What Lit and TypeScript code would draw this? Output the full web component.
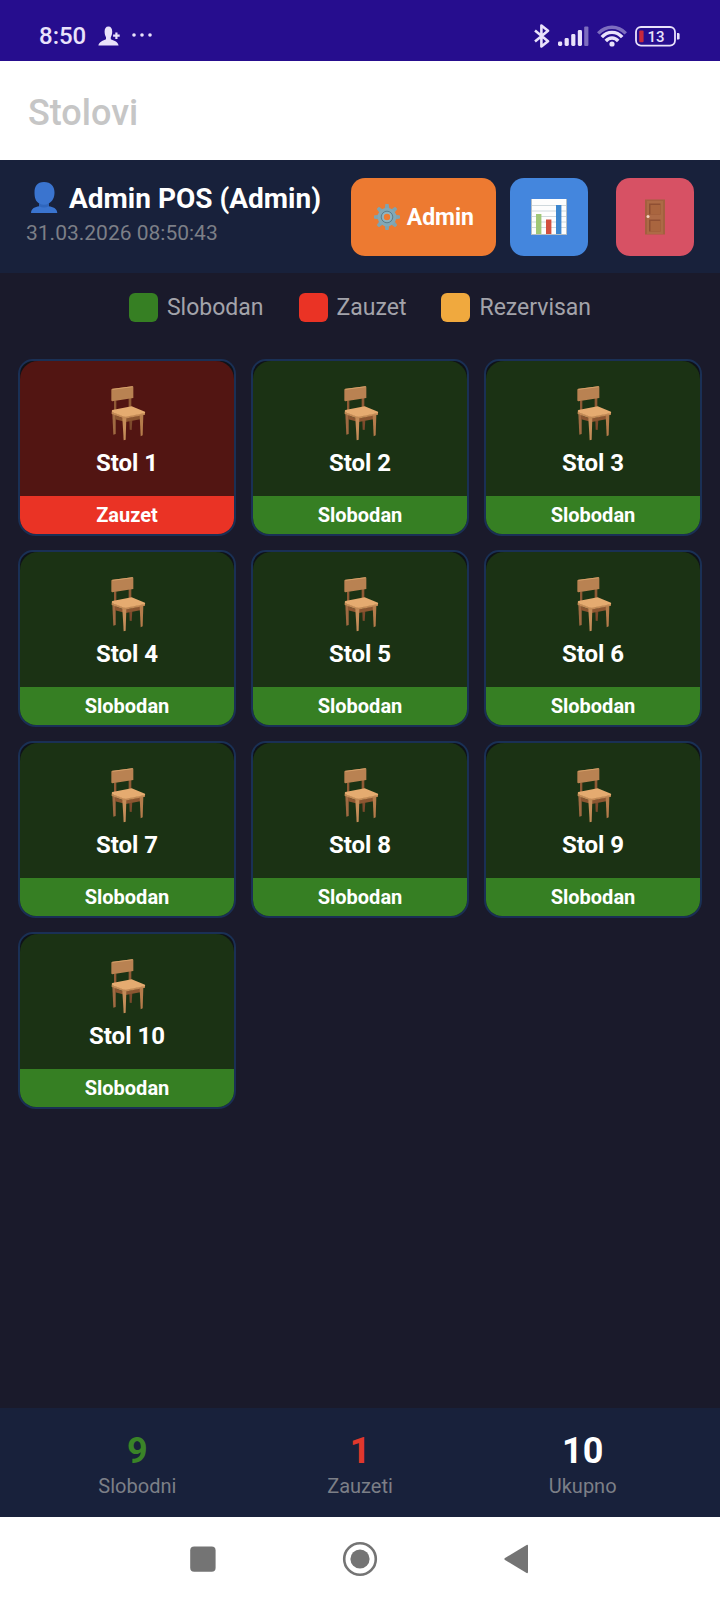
import { css, html, LitElement, svg } from 'lit'
import { customElement, property } from 'lit/decorators.js'

type TableStatus = 'free' | 'busy'

interface Table {
  name: string
  status: TableStatus
}

const statusLabels: Record<TableStatus, string> = {
  free: 'Slobodan',
  busy: 'Zauzet',
}

const tables: Table[] = Array.from({ length: 10 }, (_, i) => ({
  name: `Stol ${i + 1}`,
  status: i === 0 ? 'busy' : 'free',
}))

const legend = [
  { kind: 'free', label: 'Slobodan' },
  { kind: 'busy', label: 'Zauzet' },
  { kind: 'reserved', label: 'Rezervisan' },
]

const gearTeeth = [0, 45, 90, 135, 180, 225, 270, 315]

/**
 * System status bar with clock, notifications and device indicators.
 */
@customElement('status-bar')
export class StatusBar extends LitElement {
  static override styles = css`
    :host {
      display: flex;
      align-items: center;
      justify-content: space-between;
      box-sizing: border-box;
      height: 61px;
      padding: 11px 40px 0 39px;
      background: #260d8e;
      color: #e9e2fb;
    }

    .group {
      display: flex;
      align-items: center;
    }

    .left {
      gap: 12px;
    }

    .right {
      gap: 8px;
    }

    time {
      font-size: 24px;
      font-weight: 500;
      line-height: 28px;
    }

    svg {
      display: block;
      fill: currentColor;
    }

    .faded {
      opacity: 0.45;
    }

    .stroke {
      fill: none;
      stroke: currentColor;
    }

    .level {
      fill: #c8283c;
    }

    .charge {
      font-size: 15px;
      font-weight: 500;
    }
  `

  override render() {
    return html`
      <div class="group left">
        <time>8:50</time>
        <svg width="22" height="20" viewBox="0 0 22 20" aria-hidden="true">
          <path
            d="M10.4 0.5C13 0.5 14.2 2.6 14.2 5.6C14.2 8.2 13.6 10 12.8 11.2V13.2C15.4 14.6 20 15.2 20.6 19.6H0.4C0.8 15.6 5.4 14.6 8 13.2V11.2C7.2 10 6.6 8.2 6.6 5.6C6.6 2.6 7.8 0.5 10.4 0.5Z"
          />
          <path d="M17.3 6.4H19.5V8.6H21.7V10.8H19.5V13H17.3V10.8H15.1V8.6H17.3Z" />
        </svg>
        <svg width="20" height="6" viewBox="0 0 20 6" aria-hidden="true">
          <circle cx="2" cy="2" r="1.8" />
          <circle cx="10" cy="2" r="1.8" />
          <circle cx="18" cy="2" r="1.8" />
        </svg>
      </div>
      <div class="group right">
        <svg width="16" height="24" viewBox="0 0 16 24" aria-hidden="true">
          <path
            class="stroke"
            stroke-width="2.6"
            stroke-linejoin="round"
            d="M1 6.5L14 17.2L7.4 22.4V1.6L14 6.8L1 17.5"
          />
        </svg>
        <svg width="31" height="21" viewBox="0 0 31 21" aria-hidden="true">
          <rect x="0" y="15.6" width="4.2" height="4.4" rx="1.4" />
          <rect x="6.6" y="12" width="4.2" height="8" rx="1.4" />
          <rect x="13.2" y="8" width="4.2" height="12" rx="1.4" />
          <rect x="19.8" y="4" width="4.2" height="16" rx="1.4" />
          <rect class="faded" x="26.2" y="0.6" width="4.2" height="19.4" rx="1" />
        </svg>
        <svg width="30" height="22" viewBox="0 0 30 22" aria-hidden="true">
          <g class="stroke" stroke-width="3.4">
            <path class="faded" d="M1.2 8.4C9 0.2 21 0.2 28.8 8.4" />
            <path d="M4.8 12.2C10.6 5.8 19.4 5.8 25.2 12.2" />
            <path d="M8.8 16C12.4 12 17.6 12 21.2 16" />
          </g>
          <circle cx="15" cy="19" r="2.6" />
        </svg>
        <svg width="45" height="21" viewBox="0 0 45 21" role="img" aria-label="13%">
          <rect class="stroke" stroke-width="1.8" x="1" y="1" width="39" height="18.6" rx="5" />
          <path d="M42 7H43.2Q44.6 7 44.6 8.4V12.2Q44.6 13.6 43.2 13.6H42Z" />
          <rect class="level" x="4.2" y="4.6" width="4.4" height="11.6" rx="1" />
          <text class="charge" x="21" y="15.6" text-anchor="middle">13</text>
        </svg>
      </div>
    `
  }
}

/**
 * One restaurant table with its occupancy status.
 */
@customElement('table-card')
export class TableCard extends LitElement {
  @property()
  name = ''

  @property()
  status: TableStatus = 'free'

  static override styles = css`
    :host {
      display: block;
    }

    .card {
      display: flex;
      flex-direction: column;
      box-sizing: border-box;
      width: 100%;
      padding: 0;
      overflow: hidden;
      border: 2px solid #1a3055;
      border-radius: 15px 15px 18px 18px;
      background: #0f1218;
      color: #fff;
      font: inherit;
      cursor: pointer;
    }

    .body {
      display: flex;
      flex-direction: column;
      align-items: center;
      gap: 8px;
      padding: 25px 0 19px;
      border-radius: 18px 18px 0 0;
    }

    .free .body {
      background: #1b3214;
    }

    .busy .body {
      background: #521512;
    }

    .name {
      font-size: 24px;
      font-weight: 700;
      line-height: 28px;
    }

    .badge {
      font-size: 20px;
      font-weight: 700;
      line-height: 38px;
    }

    .free .badge {
      background: #367f23;
    }

    .busy .badge {
      background: #ea3325;
    }
  `

  override render() {
    return html`
      <button class="card ${this.status}">
        <span class="body">
          <svg width="38" height="55" viewBox="-9 0 114 165" aria-hidden="true">
            <path fill="#8f5a35" d="M9 44L16 43V76H9ZM53 36L61 35V66H53Z" />
            <path fill="#7d4a2c" d="M55 104L64 103L62 132L56 131Z" />
            <path fill="#b98252" d="M4 8L64 1Q67 1 67 4V36L4 46Q1 46 1 43V11Q1 8 4 8Z" />
            <path fill="#d9a36c" d="M2 9L64 1L67 3L6 11Z" />
            <path fill="#a06a42" d="M4 84L14 88V144L7 146Z" />
            <path fill="#8c5631" d="M12 88L40 98L96 86V98L44 108L12 100Z" />
            <path fill="#c58d59" d="M34 95H46L44 161L38 163Z" />
            <path fill="#b57c4b" d="M86 88L97 86L95 148L89 151Z" />
            <path fill="#c28955" d="M2 77L41 91L102 80V86L41 98L2 84Z" />
            <path fill="#e5ab70" d="M4 72L62 61L102 77Q104 80 100 82L44 92Q40 93 36 91L4 79Q0 75 4 72Z" />
          </svg>
          <span class="name">${this.name}</span>
        </span>
        <span class="badge">${statusLabels[this.status]}</span>
      </button>
    `
  }
}

@customElement('app-root')
export class AppRoot extends LitElement {
  static override styles = css`
    :host {
      display: flex;
      flex-direction: column;
      min-height: 100vh;
      background: #1a1a2b;
      color: #fff;
      font-family: Roboto, 'Noto Sans', sans-serif;
    }

    svg {
      display: block;
      flex: none;
    }

    button {
      padding: 0;
      border: 0;
      background: none;
      color: inherit;
      font: inherit;
      cursor: pointer;
    }

    .title {
      margin: 0;
      padding: 5px 28px 0;
      background: #fff;
      color: #c6c6c6;
      font-size: 36px;
      font-weight: 500;
      line-height: 94px;
    }

    .toolbar {
      display: flex;
      align-items: flex-start;
      gap: 14px;
      padding: 18px 26px 17px;
      background: #18213b;
    }

    .user {
      flex: 1;
      padding-top: 3px;
      white-space: nowrap;
    }

    .user-name {
      display: flex;
      gap: 8px;
      font-size: 28px;
      font-weight: 700;
      line-height: 36px;
    }

    .user-time {
      display: block;
      color: #7c7f87;
      font-size: 21px;
      line-height: 32px;
    }

    .action {
      display: flex;
      align-items: center;
      justify-content: center;
      gap: 6px;
      width: 78px;
      height: 78px;
      border-radius: 14px;
      font-size: 23px;
      font-weight: 700;
    }

    .admin {
      width: auto;
      padding: 0 22px;
      background: #ed7a31;
    }

    .reports {
      background: #4486dd;
    }

    .logout {
      margin-left: 14px;
      background: #d75164;
    }

    .legend {
      display: flex;
      justify-content: center;
      gap: 35px;
      margin: 0;
      padding: 20px 0 36px;
      list-style: none;
      color: #a3a3aa;
      font-size: 23px;
      line-height: 30px;
    }

    .legend li {
      display: flex;
      gap: 9px;
    }

    .swatch {
      width: 29px;
      height: 29px;
      border-radius: 6px;
    }

    .swatch.free {
      background: #367f23;
    }

    .swatch.busy {
      background: #ea3325;
    }

    .swatch.reserved {
      background: #f0a93e;
    }

    .tables {
      display: grid;
      flex: 1;
      grid-template-columns: repeat(3, 1fr);
      align-content: start;
      gap: 14px 15px;
      padding: 0 18px 18px;
    }

    .stats {
      display: grid;
      grid-template-columns: repeat(3, 1fr);
      margin: 0;
      padding: 22px 26px 18px;
      background: #18213b;
      text-align: center;
    }

    .stat {
      display: flex;
      flex-direction: column-reverse;
    }

    .stat dt {
      color: #7c7f87;
      font-size: 20px;
      line-height: 26px;
    }

    .stat dd {
      margin: 0;
      font-size: 36px;
      font-weight: 700;
      line-height: 43px;
    }

    .stat .free {
      color: #3a8427;
    }

    .stat .busy {
      color: #e0382c;
    }

    .navigation {
      display: flex;
      align-items: center;
      justify-content: center;
      gap: 121px;
      height: 84px;
      background: #fff;
    }
  `

  override render() {
    return html`
      <status-bar></status-bar>
      <h1 class="title">Stolovi</h1>
      ${this.renderToolbar()}
      <ul class="legend">
        ${legend.map(
          ({ kind, label }) => html`<li><span class="swatch ${kind}"></span>${label}</li>`
        )}
      </ul>
      <main class="tables">
        ${tables.map(
          ({ name, status }) => html`<table-card .name=${name} .status=${status}></table-card>`
        )}
      </main>
      ${this.renderStats()} ${this.renderNavigation()}
    `
  }

  private renderToolbar() {
    return html`
      <header class="toolbar">
        <div class="user">
          <div class="user-name">
            <svg width="35" height="35" viewBox="0 0 35 35" aria-hidden="true">
              <path
                fill="#3a74cf"
                d="M18 1C25 1 28.5 5.5 28.5 11.5C28.5 16.5 26.5 20.5 22.8 22.4V25.2C27 26 31 27 31.3 32H5C5.3 27 9 26 13.2 25.2V22.4C9.5 20.5 8.5 16.5 8.5 11.5C8.5 5.5 11 1 18 1Z"
              />
              <path fill="#2f66bd" d="M13.2 22.4Q18 25 22.8 22.4V25.2Q18 28 13.2 25.2Z" />
            </svg>
            Admin POS (Admin)
          </div>
          <time class="user-time">31.03.2026 08:50:43</time>
        </div>
        <button class="action admin">
          <svg width="28" height="28" viewBox="-14 -14 28 28" aria-hidden="true">
            ${gearTeeth.map(
              (angle) => svg`
                <path fill="#7fa3b0" d="M-2.4 -8L-1.6 -13H1.6L2.4 -8Z" transform="rotate(${angle})" />
              `
            )}
            <circle r="6.6" fill="none" stroke="#82a8b6" stroke-width="5.4" />
            <circle r="5.8" fill="none" stroke="#5d7f8c" stroke-width="1" />
            <circle r="4" fill="none" stroke="#8fb6c4" stroke-width="1.6" />
          </svg>
          Admin
        </button>
        <button class="action reports" aria-label="Izvještaji">
          <svg width="36" height="36" viewBox="0 0 36 36" aria-hidden="true">
            <rect width="36" height="36" fill="#fdfdfd" />
            <path
              stroke="#cfd8dc"
              d="M1 6.5H35M1 12H35M1 17.5H35M1 23H35M1 28.5H35"
            />
            <path stroke="#b4bdc4" d="M0.5 0V36M35.5 0V36M0 35.5H36" />
            <rect x="5" y="15" width="5.4" height="20" fill="#a0c777" />
            <rect x="15" y="20.5" width="5.4" height="14.5" fill="#d2503f" />
            <rect x="25" y="6" width="5.4" height="29" fill="#3c86cf" />
          </svg>
        </button>
        <button class="action logout" aria-label="Odjava">
          <svg width="22" height="36" viewBox="0 0 22 36" aria-hidden="true">
            <rect x="1" y="0.5" width="20" height="35" fill="#a3603f" />
            <rect x="3" y="2" width="16" height="33" fill="#ad6a46" />
            <rect x="5" y="4.5" width="11.5" height="11" fill="#8f4f33" />
            <rect x="6.5" y="6" width="10" height="9.5" fill="#a9653f" />
            <rect x="5" y="20.5" width="11.5" height="12" fill="#8f4f33" />
            <rect x="6.5" y="22" width="10" height="10.5" fill="#a9653f" />
            <circle cx="4" cy="17.6" r="1.5" fill="#f6d5c4" />
          </svg>
        </button>
      </header>
    `
  }

  private renderStats() {
    const free = tables.filter(({ status }) => status === 'free').length
    return html`
      <dl class="stats">
        <div class="stat">
          <dt>Slobodni</dt>
          <dd class="free">${free}</dd>
        </div>
        <div class="stat">
          <dt>Zauzeti</dt>
          <dd class="busy">${tables.length - free}</dd>
        </div>
        <div class="stat">
          <dt>Ukupno</dt>
          <dd>${tables.length}</dd>
        </div>
      </dl>
    `
  }

  private renderNavigation() {
    return html`
      <nav class="navigation">
        <button aria-label="Nedavno">
          <svg width="36" height="36" viewBox="0 0 36 36" fill="#747474">
            <rect x="5.2" y="5.4" width="25.4" height="25.4" rx="4" />
          </svg>
        </button>
        <button aria-label="Početna">
          <svg width="36" height="36" viewBox="0 0 36 36" fill="#747474">
            <circle cx="18" cy="18" r="15.8" fill="none" stroke="#747474" stroke-width="2.6" />
            <circle cx="18" cy="18" r="9.6" />
          </svg>
        </button>
        <button aria-label="Nazad">
          <svg width="36" height="36" viewBox="0 0 36 36" fill="#747474">
            <path
              d="M6 17L27.6 4Q29 3.4 29 5V31Q29 32.6 27.6 32L6 19Q4.6 18 6 17Z"
            />
          </svg>
        </button>
      </nav>
    `
  }
}

declare global {
  interface HTMLElementTagNameMap {
    'status-bar': StatusBar
    'table-card': TableCard
    'app-root': AppRoot
  }
}
